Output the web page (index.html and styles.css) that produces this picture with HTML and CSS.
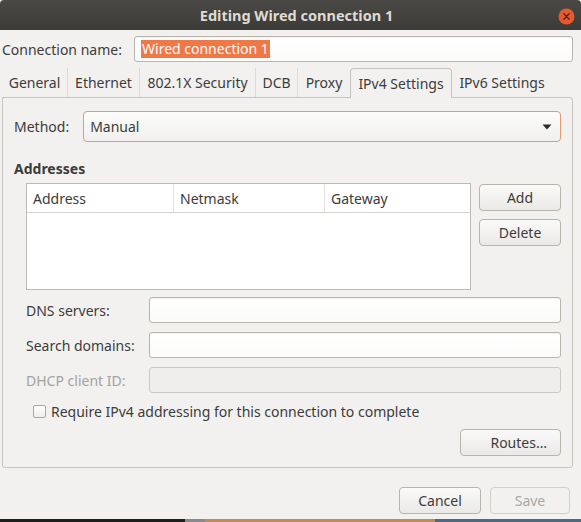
FILE: index.html
```html
<!DOCTYPE html>
<html>
<head>
<meta charset="utf-8">
<link rel="stylesheet" href="styles.css">
</head>
<body>
<div class="window">
  <div class="titlebar">
    <span></span>
    <span class="title">Editing Wired connection 1</span>
    <span class="close"><svg width="17" height="17" viewBox="0 0 16 16"><circle cx="8" cy="8" r="7.5" fill="#e9592f"/><path d="M5.5 5.5 L10.5 10.5 M10.5 5.5 L5.5 10.5" stroke="#5a2414" stroke-width="1.3" stroke-linecap="round"/></svg></span>
  </div>
  <div class="name-row">
    <span class="label">Connection name:</span>
    <div class="entry name-entry"><span class="sel">Wired connection 1</span></div>
  </div>
  <div class="tabs">
    <div class="tab t1">General</div>
    <div class="tab t2">Ethernet</div>
    <div class="tab t3">802.1X Security</div>
    <div class="tab t4">DCB</div>
    <div class="tab t5">Proxy</div>
    <div class="tab t6 active">IPv4 Settings</div>
    <div class="tab t7">IPv6 Settings</div>
  </div>
  <div class="panel">
    <div class="method-row">
      <span class="label">Method:</span>
      <div class="combo"><span>Manual</span><svg width="10" height="6" viewBox="0 0 10 6"><path d="M0.5 0.5 L9.5 0.5 L5 5.5 Z" fill="#2a2a2a"/></svg></div>
    </div>
    <div class="section">Addresses</div>
    <div class="addr-row">
      <div class="table">
        <div class="thead">
          <div class="th c1">Address</div>
          <div class="th c2">Netmask</div>
          <div class="th c3">Gateway</div>
        </div>
      </div>
      <div class="side-btns">
        <div class="btn">Add</div>
        <div class="btn">Delete</div>
      </div>
    </div>
    <div class="form">
      <span class="label">DNS servers:</span><div class="entry"></div>
      <span class="label">Search domains:</span><div class="entry"></div>
      <span class="label disabled">DHCP client ID:</span><div class="entry dis"></div>
    </div>
    <div class="check-row"><span class="check"></span><span class="label">Require IPv4 addressing for this connection to complete</span></div>
    <div class="routes-row"><div class="btn routes">Routes…</div></div>
  </div>
  <div class="footer">
    <div class="btn fbtn">Cancel</div>
    <div class="btn fbtn dis-btn">Save</div>
  </div>
  <div class="desktop">
    <span class="d1"></span><span class="d2"></span><span class="d3"></span><span class="d4"></span>
  </div>
</div>
</body>
</html>
```

FILE: styles.css
```css
html, body {
  margin: 0;
  padding: 0;
}
body {
  width: 581px;
  height: 522px;
  overflow: hidden;
  background: #f2f1f0;
  font-family: "Noto Sans", "DejaVu Sans", sans-serif;
  font-size: 14px;
  color: #3c3c3c;
}
.window {
  display: flex;
  flex-direction: column;
  height: 522px;
}
.titlebar {
  height: 30px;
  flex: none;
  background: linear-gradient(#4a4945, #3c3b37);
  display: grid;
  grid-template-columns: 1fr auto 1fr;
  align-items: center;
  border-radius: 4px 4px 0 0;
}
.title {
  color: #dfdbd2;
  font-weight: bold;
  font-size: 14.5px;
  padding-left: 12px;
}
.close {
  justify-self: end;
  margin-right: 6px;
  display: flex;
  margin-top: 2px;
}
.label {
  white-space: nowrap;
}
.label.disabled {
  color: #a3a29f;
}
.name-row {
  display: flex;
  align-items: center;
  margin: 6px 8px 0 2px;
  height: 26px;
}
.entry {
  height: 25px;
  border: 1px solid #b8b4ae;
  border-radius: 3px;
  background: linear-gradient(#ffffff, #fbfbfa);
  box-shadow: inset 0 1px 1px rgba(0,0,0,0.06);
  box-sizing: border-box;
}
.name-entry {
  margin-left: auto;
  width: 439px;
  height: 26px;
  display: flex;
  align-items: center;
  padding-left: 6px;
}
.sel {
  background: #f07746;
  color: #ffffff;
  line-height: 18px;
  padding: 0 1px;
}
.tabs {
  display: flex;
  align-items: flex-end;
  margin: 6px 0 0 2px;
  height: 29px;
  position: relative;
  z-index: 1;
}
.tab {
  display: flex;
  align-items: center;
  justify-content: center;
  box-sizing: border-box;
  height: 29px;
  border-right: 1px solid #dedbd7;
  white-space: nowrap;
}
.t1 { width: 66px; }
.t2 { width: 72px; }
.t3 { width: 116px; }
.t4 { width: 42px; }
.t5 { width: 52px; border-right: none; }
.t6 { width: 102px; }
.t7 { width: 100px; border-right: none; }
.tab.active {
  border: 1px solid #c8c4bf;
  border-bottom: none;
  border-radius: 4px 4px 0 0;
  background: #f2f1f0;
  height: 30px;
  margin-bottom: -1px;
  padding-bottom: 1px;
}
.panel {
  margin: 0 8px 0 2px;
  height: 371px;
  box-sizing: border-box;
  border: 1px solid #c8c4bf;
  border-radius: 0 3px 3px 3px;
  background: #f2f1f0;
  padding: 13px 11px 0 11px;
}
.method-row {
  display: flex;
  align-items: center;
  gap: 14px;
  height: 31px;
}
.combo {
  flex: 1;
  height: 31px;
  box-sizing: border-box;
  border: 1px solid #e19b75;
  border-radius: 4px;
  background: linear-gradient(#fcfcfb, #f1f0ee);
  display: flex;
  align-items: center;
  justify-content: space-between;
  padding: 0 8px 0 6px;
}
.section {
  font-weight: bold;
  margin-top: 19px;
  height: 16px;
  line-height: 16px;
}
.addr-row {
  display: flex;
  margin: 6px 0 0 12px;
  gap: 8px;
}
.table {
  width: 445px;
  height: 107px;
  box-sizing: border-box;
  border: 1px solid #bdb9b4;
  background: #ffffff;
}
.thead {
  display: flex;
  height: 28px;
  border-bottom: 1px solid #d5d2ce;
}
.th {
  display: flex;
  align-items: center;
  padding-left: 6px;
  box-sizing: border-box;
  border-right: 1px solid #e3e1de;
}
.c1 { width: 147px; }
.c2 { width: 151px; }
.c3 { flex: 1; border-right: none; }
.side-btns {
  display: flex;
  flex-direction: column;
  gap: 8px;
  padding-top: 1px;
}
.btn {
  width: 82px;
  height: 27px;
  box-sizing: border-box;
  border: 1px solid #b7b3ad;
  border-radius: 4px;
  background: linear-gradient(#fafaf9, #ebe9e6);
  display: flex;
  align-items: center;
  justify-content: center;
}
.form {
  display: grid;
  grid-template-columns: 123px 412px;
  row-gap: 9px;
  align-items: center;
  margin: 7px 0 0 12px;
}
.form .entry {
  height: 26px;
}
.form .entry.dis {
  background: #efeeec;
  border-color: #cdcac5;
  box-shadow: none;
}
.check-row {
  display: flex;
  align-items: center;
  gap: 5px;
  margin: 9px 0 0 19px;
}
.check {
  width: 11px;
  height: 11px;
  border: 1px solid #aaa6a0;
  border-radius: 2px;
  background: linear-gradient(#ffffff, #eeedeb);
}
.routes-row {
  display: flex;
  justify-content: flex-end;
  margin-top: 8px;
}
.routes {
  width: 101px;
  justify-content: flex-end;
  padding-right: 13px;
}
.footer {
  display: flex;
  justify-content: flex-end;
  gap: 9px;
  margin: 19px 11px 0 0;
}
.fbtn {
  width: 82px;
}
.dis-btn {
  width: 80px;
  color: #a9a7a3;
  border-color: #d2cfcb;
  background: #f2f1f0;
}
.desktop {
  margin-top: auto;
  height: 3px;
  display: flex;
  background: #2b2b2b;
}
.desktop span { height: 3px; }
.d1 { width: 185px; background: #1e1e1e; }
.d2 { width: 20px; background: #8a8a8a; }
.d3 { width: 230px; background: #c08a5a; }
.d4 { flex: 1; background: #4a6a8a; }
```
